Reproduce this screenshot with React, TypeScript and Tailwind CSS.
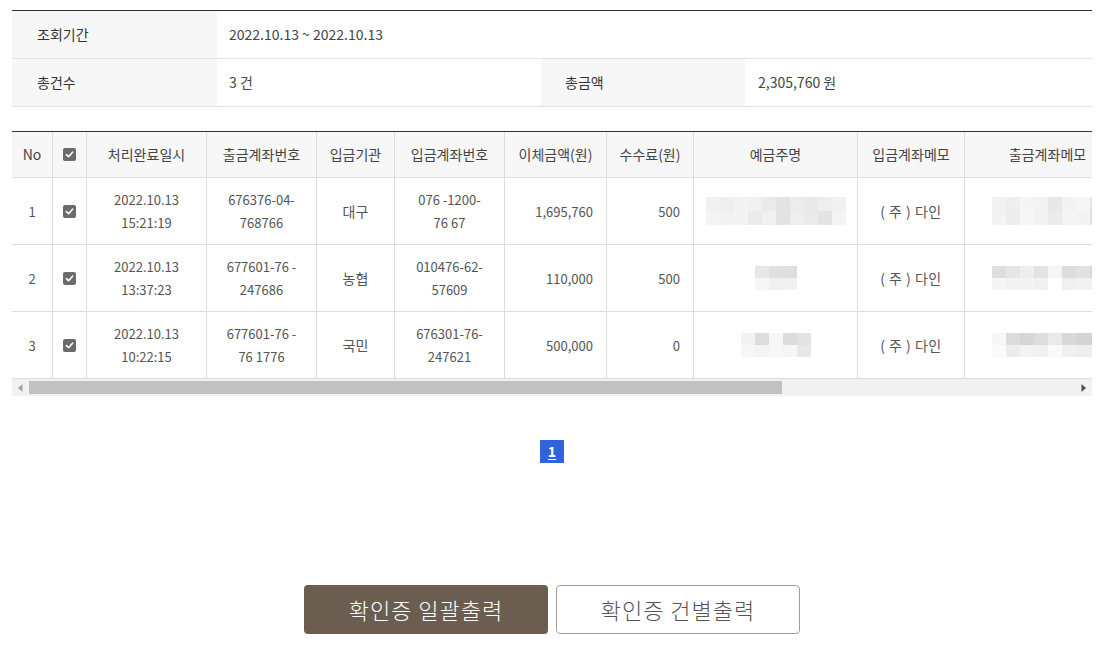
import React from "react";

const FONT = { fontFamily: '"Noto Sans CJK KR", "Open Sans", sans-serif' };

const COLS =
  "grid grid-cols-[40px_34px_120px_110px_78px_110px_102px_87px_164px_107px_166px_120px_140px_130px]";

function Check() {
  return (
    <span className="inline-flex h-[13px] w-[13px] items-center justify-center rounded-[2px] bg-[#6b6b6b]">
      <svg width="9" height="9" viewBox="0 0 10 10">
        <path d="M1.6 5.2 L4 7.5 L8.4 2.4" fill="none" stroke="#fff" strokeWidth="1.8" strokeLinecap="round" strokeLinejoin="round" />
      </svg>
    </span>
  );
}

function Mosaic({ top, bottom, cw, h }: { top: string[]; bottom: string[]; cw: string; h: string }) {
  return (
    <div className="flex flex-col">
      <div className="flex">
        {top.map((c, i) => (
          <div key={i} className={`${cw} ${h} ${c}`} />
        ))}
      </div>
      <div className="flex">
        {bottom.map((c, i) => (
          <div key={i} className={`${cw} ${h} ${c}`} />
        ))}
      </div>
    </div>
  );
}

type Row = {
  no: string;
  date: string;
  time: string;
  out1: string;
  out2: string;
  bank: string;
  in1: string;
  in2: string;
  amount: string;
  fee: string;
  name: React.ReactNode;
  outMemo: React.ReactNode;
};

const rows: Row[] = [
  {
    no: "1",
    date: "2022.10.13",
    time: "15:21:19",
    out1: "676376-04-",
    out2: "768766",
    bank: "대구",
    in1: "076 -1200-",
    in2: "76 67",
    amount: "1,695,760",
    fee: "500",
    name: (
      <Mosaic
        cw="w-[14px]"
        h="h-[14px]"
        top={["bg-[#f1f1f1]", "bg-[#eeeeee]", "bg-[#f3f3f3]", "bg-[#f0f0f0]", "bg-[#eaeaea]", "bg-[#e4e4e4]", "bg-[#ececec]", "bg-[#e9e9e9]", "bg-[#eeeeee]", "bg-[#f1f1f1]"]}
        bottom={["bg-[#f4f4f4]", "bg-[#f2f2f2]", "bg-[#f3f3f3]", "bg-[#eaeaea]", "bg-[#f0f0f0]", "bg-[#e3e3e3]", "bg-[#eeeeee]", "bg-[#eaeaea]", "bg-[#e4e4e4]", "bg-[#f2f4f6]"]}
      />
    ),
    outMemo: (
      <Mosaic
        cw="w-[14px]"
        h="h-[14px]"
        top={["bg-[#f2f2f2]", "bg-[#eeeeee]", "bg-[#f5f5f5]", "bg-[#f3f3f3]", "bg-[#e8e8e8]", "bg-[#f3f3f3]", "bg-[#f6f6f6]", "bg-[#e4e4e4]"]}
        bottom={["bg-[#f3f3f3]", "bg-[#ededed]", "bg-[#f6f6f6]", "bg-[#f2f2f2]", "bg-[#ebebeb]", "bg-[#f4f4f4]", "bg-[#f3f3f3]", "bg-[#e1e1e1]"]}
      />
    ),
  },
  {
    no: "2",
    date: "2022.10.13",
    time: "13:37:23",
    out1: "677601-76 -",
    out2: "247686",
    bank: "농협",
    in1: "010476-62-",
    in2: "57609",
    amount: "110,000",
    fee: "500",
    name: (
      <Mosaic
        cw="w-[14px]"
        h="h-[12px]"
        top={["bg-[#e7e7e7]", "bg-[#e0e0e0]", "bg-[#dedede]"]}
        bottom={["bg-[#f6f6f6]", "bg-[#f0f0f0]", "bg-[#f1f1f1]"]}
      />
    ),
    outMemo: (
      <Mosaic
        cw="w-[14px]"
        h="h-[12px]"
        top={["bg-[#dedede]", "bg-[#e6e6e6]", "bg-[#eeeeee]", "bg-[#e0e4e6]", "bg-[#f5f5f5]", "bg-[#dddddd]", "bg-[#e2e2e2]", "bg-[#d8d8d8]"]}
        bottom={["bg-[#f5f5f5]", "bg-[#f2f2f2]", "bg-[#f3f3f3]", "bg-[#f0f0f0]", "bg-[#ffffff]", "bg-[#f0f0f0]", "bg-[#f2f2f2]", "bg-[#eef0f1]"]}
      />
    ),
  },
  {
    no: "3",
    date: "2022.10.13",
    time: "10:22:15",
    out1: "677601-76 -",
    out2: "76 1776",
    bank: "국민",
    in1: "676301-76-",
    in2: "247621",
    amount: "500,000",
    fee: "0",
    name: (
      <Mosaic
        cw="w-[14px]"
        h="h-[12px]"
        top={["bg-[#f3f3f3]", "bg-[#dddddd]", "bg-[#f6f6f6]", "bg-[#dcdcdc]", "bg-[#e3e3e3]"]}
        bottom={["bg-[#f7f7f7]", "bg-[#f4f4f4]", "bg-[#f7f7f7]", "bg-[#f5f5f5]", "bg-[#e8e8e8]"]}
      />
    ),
    outMemo: (
      <Mosaic
        cw="w-[14px]"
        h="h-[12px]"
        top={["bg-[#f7f7f7]", "bg-[#dcdcdc]", "bg-[#d6d6d6]", "bg-[#dddddd]", "bg-[#eaeaea]", "bg-[#d9d9d9]", "bg-[#d4d4d4]", "bg-[#d0d3d4]"]}
        bottom={["bg-[#fafafa]", "bg-[#ececec]", "bg-[#f3f3f3]", "bg-[#f0f0f0]", "bg-[#f9f9f9]", "bg-[#f0f0f0]", "bg-[#eeeeee]", "bg-[#eceeef]"]}
      />
    ),
  },
];

const headers = [
  "No",
  "__check__",
  "처리완료일시",
  "출금계좌번호",
  "입금기관",
  "입금계좌번호",
  "이체금액(원)",
  "수수료(원)",
  "예금주명",
  "입금계좌메모",
  "출금계좌메모",
  "처리결과",
  "오류사유",
  "비고",
];

export default function App() {
  return (
    <div className="h-[651px] w-[1113px] overflow-hidden bg-white px-3 pt-[10px] text-[#444]" style={FONT}>
      {/* Summary */}
      <div className="w-[1080px] border-t border-[#333] text-[14px]">
        <div className="grid h-[48px] grid-cols-[205px_1fr] border-b border-[#e3e3e3]">
          <div className="flex items-center bg-[#f7f7f7] pl-[25px] text-[#333]">조회기간</div>
          <div className="flex items-center pl-[12px] text-[#444]">2022.10.13 ~ 2022.10.13</div>
        </div>
        <div className="grid h-[48px] grid-cols-[205px_324px_204px_1fr] border-b border-[#e3e3e3]">
          <div className="flex items-center bg-[#f7f7f7] pl-[25px] text-[#333]">총건수</div>
          <div className="flex items-center pl-[12px] text-[#444]">3 건</div>
          <div className="flex items-center bg-[#f7f7f7] pl-[24px] text-[#333]">총금액</div>
          <div className="flex items-center pl-[13px] text-[#444]">2,305,760 원</div>
        </div>
      </div>

      {/* Main table */}
      <div className="mt-[24px] w-[1080px] overflow-hidden border-t border-[#333]">
        <div className="w-[1500px]">
          <div className={`${COLS} h-[46px] border-b border-[#dddddd] bg-[#f7f7f7] text-[14px] text-[#444]`}>
            {headers.map((h, i) => (
              <div
                key={i}
                className={`flex items-center justify-center ${i === 0 ? "" : "border-l border-[#dddddd]"}`}
              >
                {h === "__check__" ? <Check /> : h}
              </div>
            ))}
          </div>
          {rows.map((r) => (
            <div key={r.no} className={`${COLS} h-[67px] border-b border-[#dddddd] text-[13px] leading-[23px] text-[#555]`}>
              <div className="flex items-center justify-center">{r.no}</div>
              <div className="flex items-center justify-center border-l border-[#dddddd]">
                <Check />
              </div>
              <div className="flex flex-col items-center justify-center border-l border-[#dddddd]">
                <span>{r.date}</span>
                <span>{r.time}</span>
              </div>
              <div className="flex flex-col items-center justify-center border-l border-[#dddddd]">
                <span>{r.out1}</span>
                <span>{r.out2}</span>
              </div>
              <div className="flex items-center justify-center border-l border-[#dddddd] text-[14px]">{r.bank}</div>
              <div className="flex flex-col items-center justify-center border-l border-[#dddddd]">
                <span>{r.in1}</span>
                <span>{r.in2}</span>
              </div>
              <div className="flex items-center justify-end border-l border-[#dddddd] pr-[13px]">{r.amount}</div>
              <div className="flex items-center justify-end border-l border-[#dddddd] pr-[13px]">{r.fee}</div>
              <div className="flex items-center justify-center border-l border-[#dddddd]">{r.name}</div>
              <div className="flex items-center justify-center border-l border-[#dddddd] text-[14px] tracking-[0.5px]">( 주 ) 다인</div>
              <div className="flex items-center justify-center border-l border-[#dddddd]">{r.outMemo}</div>
              <div className="flex items-center justify-center border-l border-[#dddddd]">완료</div>
              <div className="flex items-center justify-center border-l border-[#dddddd]"></div>
              <div className="flex items-center justify-center border-l border-[#dddddd]"></div>
            </div>
          ))}
        </div>
      </div>

      {/* Fake horizontal scrollbar */}
      <div className="flex h-[17px] w-[1080px] items-stretch bg-[#f1f1f1]">
        <div className="flex w-[17px] items-center justify-center">
          <svg width="5" height="8" viewBox="0 0 5 8">
            <path d="M4.5 0 L0 4 L4.5 8 Z" fill="#a3a3a3" />
          </svg>
        </div>
        <div className="flex flex-1 items-center">
          <div className="h-[13px] w-[753px] bg-[#c1c1c1]" />
        </div>
        <div className="flex w-[17px] items-center justify-center">
          <svg width="5" height="8" viewBox="0 0 5 8">
            <path d="M0.5 0 L5 4 L0.5 8 Z" fill="#505050" />
          </svg>
        </div>
      </div>

      {/* Pagination */}
      <div className="mt-[44px] flex w-[1080px] justify-center">
        <span className="flex h-[23px] w-[24px] items-center justify-center bg-[#3162dd] text-[14px] font-bold text-white underline underline-offset-2">
          1
        </span>
      </div>

      {/* Buttons */}
      <div className="mt-[122px] flex w-[1080px] justify-center gap-[8px]">
        <button className="flex h-[49px] w-[244px] items-center justify-center rounded-[4px] bg-[#6b5e51] text-[22px] font-light tracking-[1px] text-white">
          확인증 일괄출력
        </button>
        <button className="flex h-[49px] w-[244px] items-center justify-center rounded-[4px] border border-[#a59d95] bg-white text-[22px] font-light tracking-[1px] text-[#555]">
          확인증 건별출력
        </button>
      </div>
    </div>
  );
}
